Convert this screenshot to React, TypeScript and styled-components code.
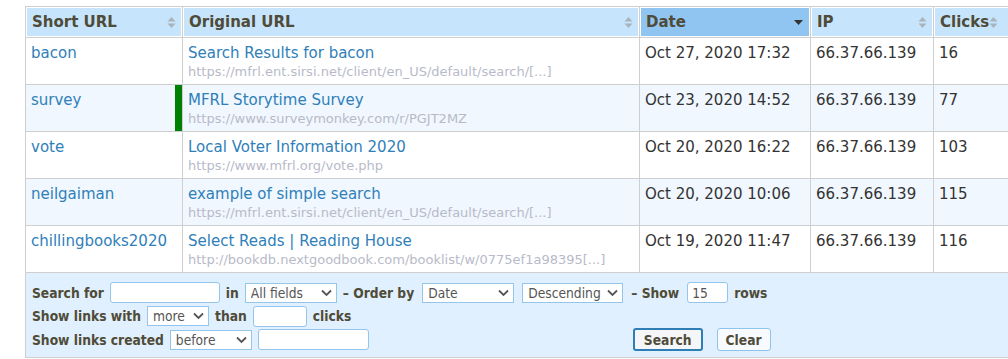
import styled, { createGlobalStyle } from "styled-components";

const Global = createGlobalStyle`
  html, body {
    margin: 0;
    padding: 0;
    background: #fff;
    overflow: hidden;
  }
  body {
    font-family: "DejaVu Sans", sans-serif;
    color: #333;
  }
`;

const formFont = `"DejaVu Sans Condensed", "DejaVu Sans", sans-serif`;

const S = {
  Page: styled.div`
    padding: 6px 0 0 25px;
    width: 1100px;
  `,
  Table: styled.table`
    border-collapse: collapse;
    table-layout: fixed;
    width: 998px;
    border: 1px solid #cfcfcf;
  `,
  Th: styled.th<{ $sorted?: boolean }>`
    height: 30px;
    padding: 0 6px;
    text-align: left;
    font-size: 15px;
    font-weight: bold;
    color: #4f4b38;
    background: ${(p) => (p.$sorted ? "#90c5f2" : "#c6e5fc")};
    border: 1px solid #cfcfcf;
    box-shadow: inset 0 0 0 1px #fff;
  `,
  ThInner: styled.div<{ $tight?: boolean }>`
    display: flex;
    align-items: center;
    justify-content: ${(p) => (p.$tight ? "flex-start" : "space-between")};
  `,
  Tr: styled.tr<{ $alt?: boolean }>`
    background: ${(p) => (p.$alt ? "#f0f7fe" : "#fff")};
  `,
  Td: styled.td<{ $flag?: boolean }>`
    height: 41px;
    padding: 5px 5px 0 5px;
    vertical-align: top;
    border: 1px solid #cfcfcf;
    font-size: 15px;
    line-height: 20px;
    color: #333;
    box-shadow: ${(p) => (p.$flag ? "inset -7px 0 0 #008000" : "none")};
  `,
  Link: styled.a`
    color: #2f80b9;
    text-decoration: none;
    display: block;
  `,
  Sub: styled.div`
    color: #b8bac9;
    font-size: 13px;
    line-height: 17px;
  `,
  FootCell: styled.td`
    background: #e0f0fe;
    border: 1px solid #cfcfcf;
    padding: 8px 6px 5px 6px;
    height: 70px;
    vertical-align: top;
  `,
  FormRow: styled.div`
    display: flex;
    align-items: center;
    gap: 6px;
    height: 23.5px;
  `,
  Label: styled.span<{ $gap?: number }>`
    font-family: ${formFont};
    font-size: 13.7px;
    font-weight: bold;
    color: #4f4b38;
    white-space: nowrap;
    margin-left: ${(p) => p.$gap ?? 0}px;
  `,
  Input: styled.input<{ $w: number; $gap?: number }>`
    width: ${(p) => p.$w}px;
    height: 21px;
    box-sizing: border-box;
    border: 1px solid #93c6ea;
    border-radius: 3px;
    background: #fff;
    font-family: ${formFont};
    font-size: 13.7px;
    color: #555;
    padding: 0 4px;
    outline: none;
    margin-left: ${(p) => p.$gap ?? 0}px;
  `,
  SelectWrap: styled.span<{ $w: number; $gap?: number }>`
    position: relative;
    display: inline-flex;
    width: ${(p) => p.$w}px;
    height: 20px;
    margin-left: ${(p) => p.$gap ?? 0}px;
  `,
  Select: styled.select`
    appearance: none;
    width: 100%;
    height: 100%;
    box-sizing: border-box;
    border: 1px solid #93c6ea;
    border-radius: 0;
    background: #fff;
    font-family: ${formFont};
    font-size: 13.7px;
    color: #555;
    padding: 0 18px 0 5px;
    outline: none;
  `,
  Chevron: styled.svg`
    position: absolute;
    right: 5px;
    top: 6px;
    pointer-events: none;
  `,
  Buttons: styled.div`
    display: flex;
    gap: 14px;
    margin-left: 258px;
  `,
  Button: styled.button<{ $primary?: boolean }>`
    height: 23px;
    box-sizing: border-box;
    padding: 0 ${(p) => (p.$primary ? "9px" : "8px")};
    border: ${(p) => (p.$primary ? "2px solid #2f7db5" : "1px solid #8ec4ea")};
    border-radius: 3px;
    background: ${(p) => (p.$primary ? "#f4f6f8" : "#f7fbff")};
    font-family: ${formFont};
    font-size: 13.7px;
    font-weight: bold;
    color: #4f4b38;
  `,
};

const SortIcon = ({ active }: { active?: boolean }) =>
  active ? (
    <svg width="11" height="12" viewBox="0 0 11 12">
      <path d="M1 4h9l-4.5 5z" fill="#333" />
    </svg>
  ) : (
    <svg width="9" height="13" viewBox="0 0 9 13">
      <path d="M0.5 5.5h8L4.5 1z" fill="#a9b3bb" />
      <path d="M0.5 7.5h8L4.5 12z" fill="#a9b3bb" />
    </svg>
  );

const Dropdown = ({ w, value, gap }: { w: number; value: string; gap?: number }) => (
  <S.SelectWrap $w={w} $gap={gap}>
    <S.Select defaultValue={value}>
      <option>{value}</option>
    </S.Select>
    <S.Chevron width="11" height="8" viewBox="0 0 11 8">
      <path d="M1 1.5l4.5 4.5 4.5-4.5" stroke="#555" strokeWidth="1.8" fill="none" />
    </S.Chevron>
  </S.SelectWrap>
);

const rows = [
  {
    short: "bacon",
    title: "Search Results for bacon",
    url: "https://mfrl.ent.sirsi.net/client/en_US/default/search/[...]",
    date: "Oct 27, 2020 17:32",
    ip: "66.37.66.139",
    clicks: 16,
  },
  {
    short: "survey",
    title: "MFRL Storytime Survey",
    url: "https://www.surveymonkey.com/r/PGJT2MZ",
    date: "Oct 23, 2020 14:52",
    ip: "66.37.66.139",
    clicks: 77,
    flag: true,
  },
  {
    short: "vote",
    title: "Local Voter Information 2020",
    url: "https://www.mfrl.org/vote.php",
    date: "Oct 20, 2020 16:22",
    ip: "66.37.66.139",
    clicks: 103,
  },
  {
    short: "neilgaiman",
    title: "example of simple search",
    url: "https://mfrl.ent.sirsi.net/client/en_US/default/search/[...]",
    date: "Oct 20, 2020 10:06",
    ip: "66.37.66.139",
    clicks: 115,
  },
  {
    short: "chillingbooks2020",
    title: "Select Reads | Reading House",
    url: "http://bookdb.nextgoodbook.com/booklist/w/0775ef1a98395[...]",
    date: "Oct 19, 2020 11:47",
    ip: "66.37.66.139",
    clicks: 116,
  },
];

const columns = [
  { name: "Short URL", width: 157 },
  { name: "Original URL", width: 457 },
  { name: "Date", width: 171, sorted: true },
  { name: "IP", width: 123 },
  { name: "Clicks", width: 90 },
];

const App = () => {
  return (
    <S.Page>
      <Global />
      <S.Table>
        <colgroup>
          {columns.map((c) => (
            <col key={c.name} style={{ width: c.width }} />
          ))}
        </colgroup>
        <thead>
          <tr>
            {columns.map((c) => (
              <S.Th key={c.name} $sorted={c.sorted}>
                <S.ThInner $tight={c.name === "Clicks"}>
                  {c.name}
                  <SortIcon active={c.sorted} />
                </S.ThInner>
              </S.Th>
            ))}
          </tr>
        </thead>
        <tbody>
          {rows.map((r, i) => (
            <S.Tr key={r.short} $alt={i % 2 === 1}>
              <S.Td $flag={r.flag}>
                <S.Link href="#">{r.short}</S.Link>
              </S.Td>
              <S.Td>
                <S.Link href="#">{r.title}</S.Link>
                <S.Sub>{r.url}</S.Sub>
              </S.Td>
              <S.Td>{r.date}</S.Td>
              <S.Td>{r.ip}</S.Td>
              <S.Td>{r.clicks}</S.Td>
            </S.Tr>
          ))}
        </tbody>
        <tfoot>
          <tr>
            <S.FootCell colSpan={5}>
              <S.FormRow>
                <S.Label>Search for</S.Label>
                <S.Input $w={110} />
                <S.Label>in</S.Label>
                <Dropdown w={92} value="All fields" />
                <S.Label>– Order by</S.Label>
                <Dropdown w={92} value="Date" gap={2} />
                <Dropdown w={101} value="Descending" gap={2} />
                <S.Label $gap={2}>– Show</S.Label>
                <S.Input $w={41} $gap={2} defaultValue="15" />
                <S.Label>rows</S.Label>
              </S.FormRow>
              <S.FormRow>
                <S.Label>Show links with</S.Label>
                <Dropdown w={62} value="more" />
                <S.Label>than</S.Label>
                <S.Input $w={54} />
                <S.Label>clicks</S.Label>
              </S.FormRow>
              <S.FormRow>
                <S.Label>Show links created</S.Label>
                <Dropdown w={82} value="before" />
                <S.Input $w={111} />
                <S.Buttons>
                  <S.Button $primary>Search</S.Button>
                  <S.Button>Clear</S.Button>
                </S.Buttons>
              </S.FormRow>
            </S.FootCell>
          </tr>
        </tfoot>
      </S.Table>
    </S.Page>
  );
};

export default App;
